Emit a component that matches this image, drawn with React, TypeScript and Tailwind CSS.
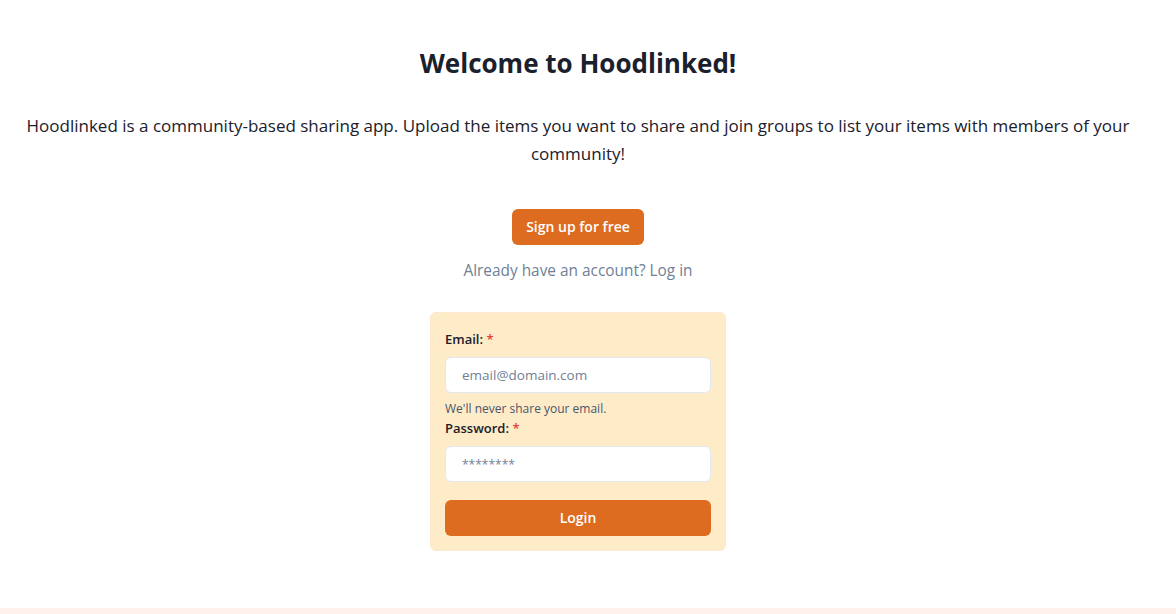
export default function App() {
  return (
    <div className="min-h-[614px] flex flex-col bg-white font-['Open_Sans',sans-serif] text-[#1a202c]">
      <main className="flex-1 flex flex-col items-center text-center pl-4 pr-9 pt-[47px]">
        <h1 className="text-[26px] font-bold leading-8">Welcome to Hoodlinked!</h1>
        <p className="mt-[33px] text-[17px] leading-7">
          Hoodlinked is a community-based sharing app. Upload the items you want to share and join groups to list your items with members of your community!
        </p>

        <button className="mt-[41px] h-9 px-[14px] rounded-md bg-[#dd6b20] text-white text-sm font-semibold">
          Sign up for free
        </button>
        <p className="mt-[14px] text-[15.4px] leading-6 text-[#718096]">Already have an account? Log in</p>

        {/* Login form */}
        <form className="mt-[29px] w-[296px] rounded-md border border-[#fbe8cf] bg-[#feebc8] px-[14px] pt-4 pb-[14px] text-left">
          <label className="block text-[13px] font-semibold leading-5">
            Email: <span className="text-[#e53e3e]">*</span>
          </label>
          <input
            placeholder="email@domain.com"
            className="mt-2 h-9 w-full rounded-md border border-[#e2e8f0] bg-white px-4 text-[13.5px] outline-none placeholder:text-[#718096]"
          />
          <p className="mt-[7px] text-[12px] leading-[18px] text-[#4a5568]">We'll never share your email.</p>
          <label className="block text-[13px] font-semibold leading-5">
            Password: <span className="text-[#e53e3e]">*</span>
          </label>
          <input
            type="password"
            placeholder="********"
            className="mt-2 h-9 w-full rounded-md border border-[#e2e8f0] bg-white px-4 text-[12px] outline-none placeholder:text-[#718096]"
          />
          <button type="button" className="mt-[18px] h-9 w-full rounded-md bg-[#dd6b20] text-white text-sm font-semibold">
            Login
          </button>
        </form>
      </main>
      <footer className="h-[6px] bg-[#fff2ec]" />
    </div>
  );
}
